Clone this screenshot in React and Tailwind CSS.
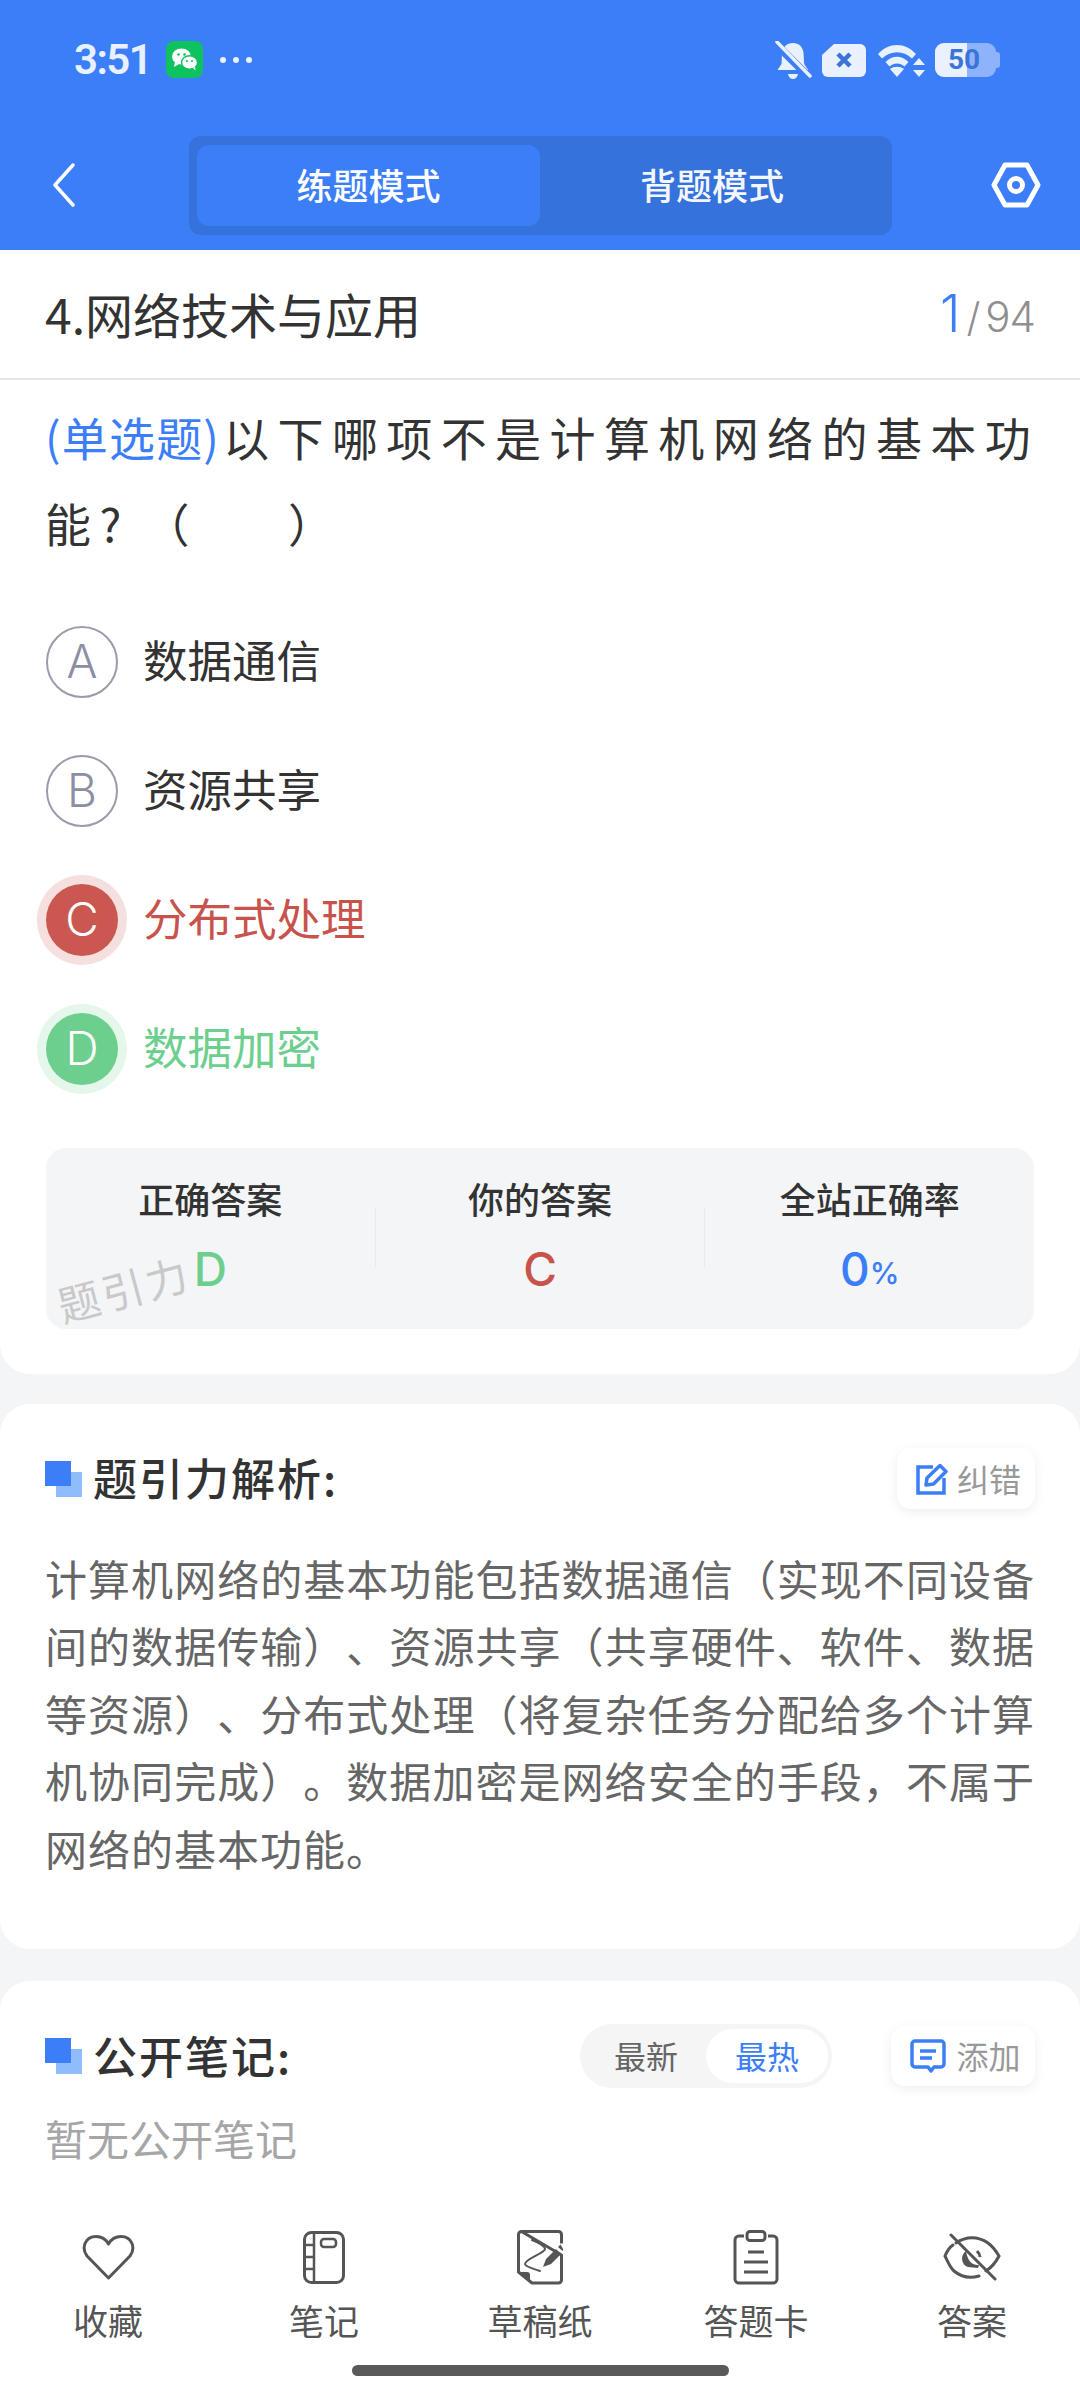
import React from "react";

const CJK = "font-['Noto_Sans_CJK_SC','Noto_Sans',sans-serif]";

function Squares() {
  return (
    <div className="relative w-[36px] h-[36px] shrink-0">
      <div className="absolute left-[11px] top-[11px] w-[26px] h-[25px] bg-[#8fbcfb]" />
      <div className="absolute left-0 top-0 w-[26px] h-[25px] bg-[#3b7ef8]" />
    </div>
  );
}

function Option({ letter, text, state }) {
  const circle =
    state === "wrong"
      ? "bg-[#cb5850] text-white shadow-[0_0_0_9px_#f6e0df]"
      : state === "right"
      ? "bg-[#6dcf8e] text-white shadow-[0_0_0_9px_#e4f7ea]"
      : "border-2 border-[#9a9cac] text-[#8c8fa3]";
  const color =
    state === "wrong" ? "text-[#c8534c]" : state === "right" ? "text-[#6dcf8e]" : "text-[#333333]";
  return (
    <div className="h-[129px] flex items-center">
      <div className={`w-[72px] h-[72px] rounded-full flex items-center justify-center text-[46px] font-light font-['Inter',sans-serif] ${circle}`}>
        {letter}
      </div>
      <div className={`ml-[25px] pb-[4px] text-[44.500px] leading-none ${color}`}>{text}</div>
    </div>
  );
}

function Stat({ label, children }) {
  return (
    <div className="flex-1 flex flex-col items-center">
      <div className="text-[36px] leading-[46px] font-medium text-[#333333]">{label}</div>
      <div className="mt-[22px] h-[52px] flex items-center font-['Inter',sans-serif] font-medium text-[46px] leading-none">
        {children}
      </div>
    </div>
  );
}

function NavItem({ label, icon }) {
  return (
    <div className="w-[216px] flex flex-col items-center">
      <div className="h-[56px] flex items-center justify-center">{icon}</div>
      <div className="mt-[17px] text-[35px] leading-[35px] text-[#555555]">{label}</div>
    </div>
  );
}

export default function App() {
  return (
    <div className={`w-[1080px] h-[2400px] flex flex-col bg-[#f4f5f7] overflow-hidden [text-spacing-trim:space-all] ${CJK}`}>
      {/* Header */}
      <div className="h-[250px] bg-[#3b7ef8] shrink-0">
        <div className="h-[136px] flex items-start justify-between pt-[41px] pl-[74px] pr-[80px]">
          <div className="flex items-center h-[37px]">
            <span className="text-[42px] leading-none font-semibold tracking-[-1.600px] text-[#e9f0fe] font-['Roboto',sans-serif]">3:51</span>
            <div className="ml-[15px] w-[37px] h-[37px] rounded-[8px] bg-[#0ec25f] flex items-center justify-center">
              <svg width="27" height="23" viewBox="0 0 27 23">
                <ellipse cx="10.500" cy="8.500" rx="9.500" ry="8" fill="#fff" />
                <path d="M4 14l-1 5 5-3z" fill="#fff" />
                <ellipse cx="18.500" cy="14.500" rx="8" ry="6.800" fill="#fff" stroke="#0ec25f" strokeWidth="1.400" />
                <path d="M22 20l2.500 2.500-.5-4z" fill="#fff" />
                <circle cx="7.500" cy="6.500" r="1.300" fill="#0ec25f" />
                <circle cx="13.500" cy="6.500" r="1.300" fill="#0ec25f" />
                <circle cx="16" cy="13" r="1.100" fill="#0ec25f" />
                <circle cx="21" cy="13" r="1.100" fill="#0ec25f" />
              </svg>
            </div>
            <div className="ml-[17px] flex gap-[7px]">
              <div className="w-[6px] h-[6px] rounded-full bg-[#e9f0fe]" />
              <div className="w-[6px] h-[6px] rounded-full bg-[#e9f0fe]" />
              <div className="w-[6px] h-[6px] rounded-full bg-[#e9f0fe]" />
            </div>
          </div>
          <div className="flex items-center h-[37px] text-[#e9f0fe]">
            <svg width="38" height="40" viewBox="0 0 38 40" className="mt-[2px]">
              <path d="M19 2c6 0 10 4 10.500 10l.7 11 4 6H3.500l4-6 .5-11C8.500 6 13 2 19 2z" fill="#e9f0fe" />
              <path d="M14 33h10c-.5 3-2.500 5-5 5s-4.500-2-5-5z" fill="#e9f0fe" />
              <path d="M2 3l33 33" stroke="#3b7ef8" strokeWidth="8" />
              <path d="M3 1l33 34" stroke="#e9f0fe" strokeWidth="3.500" strokeLinecap="round" />
            </svg>
            <svg width="44" height="34" viewBox="0 0 44 34" className="ml-[10px]">
              <path d="M12 1h26a6 6 0 0 1 6 6v21a6 6 0 0 1-6 6H6a6 6 0 0 1-6-6V12z" fill="#e9f0fe" />
              <path d="M16 11l12 12M28 11L16 23" stroke="#3b74d8" strokeWidth="4.500" />
            </svg>
            <svg width="48" height="34" viewBox="0 0 48 34" className="ml-[12px]">
              <path d="M0 11C11 -1 27 -1 38 11l-4 4.500C25 7 13 7 4 15.500z" fill="#e9f0fe" />
              <path d="M7.500 19c7-7 16-7 23 0l-4 4.500c-4.500-4-10.500-4-15 0z" fill="#e9f0fe" />
              <path d="M19 34l-7-8c4-3 10-3 14 0z" fill="#e9f0fe" />
              <path d="M41 15l6 7H35zM41 34l-6-7h12z" fill="#e9f0fe" />
            </svg>
            <div className="ml-[9px] relative w-[65px] h-[34px]">
              <div className="absolute right-0 top-[9px] w-[5px] h-[16px] rounded-r-[3px] bg-[#8fb3fa]" />
              <div className="absolute left-0 top-0 w-[61px] h-[34px] rounded-[9px] bg-[#8fb3fa] overflow-hidden">
                <div className="w-[32px] h-full bg-[#e9f0fe]" />
              </div>
              <div className="absolute left-[13px] top-0 h-[34px] flex items-center text-[28px] leading-none font-bold text-[#3b74d8] font-['Roboto',sans-serif]">50</div>
            </div>
          </div>
        </div>
        <div className="h-[99px] flex items-center pl-[52px]">
          <svg width="24" height="44" viewBox="0 0 24 44" className="-mt-[2px]">
            <path d="M21 2L3 22l18 20" fill="none" stroke="#fff" strokeWidth="3.500" strokeLinecap="round" strokeLinejoin="round" />
          </svg>
          <div className="ml-[113px] w-[703px] h-[99px] rounded-[12px] bg-[#3672dc] flex items-center px-[8px]">
            <div className="w-[343px] h-[81px] pb-[4px] rounded-[12px] bg-[#3b7ef8] flex items-center justify-center text-[36px] font-medium text-white">练题模式</div>
            <div className="w-[344px] h-[81px] pb-[4px] flex items-center justify-center text-[36px] font-medium text-[#f4f7fe]">背题模式</div>
          </div>
          <svg width="50" height="46" viewBox="0 0 50 46" className="ml-[99px] -mt-[1px]">
            <path d="M14 3h22l11 20-11 20H14L3 23z" fill="none" stroke="#fff" strokeWidth="5" strokeLinejoin="round" />
            <circle cx="25" cy="23" r="6.500" fill="none" stroke="#fff" strokeWidth="5" />
          </svg>
        </div>
      </div>

      {/* Question card */}
      <div className="bg-white rounded-b-[30px] pb-[45px] shrink-0">
        <div className="h-[130px] border-b-2 border-[#e5e6e8] flex items-center justify-between px-[45px]">
          <div className="pb-[3px] text-[48px] leading-none text-[#333333]">4.网络技术与应用</div>
          <div className="flex items-baseline font-['Inter',sans-serif]">
            <span className="text-[52px] leading-none font-light text-[#3b7ef8]">1</span>
            <span className="ml-[6px] text-[40px] leading-none font-light text-[#8f8f8f]">/</span>
            <span className="ml-[5px] text-[42px] leading-none tracking-[-1px] font-light text-[#8f8f8f]">94</span>
          </div>
        </div>
        <div className="px-[46px]">
          <div className="pt-[13px] -ml-[1px] -mr-[16px] text-[46px] leading-[86px] text-[#333333] tracking-[8.400px]">
            <span className="text-[#3b7ef8] tracking-[1.200px] mr-[3px]">(单选题)</span>
            以下哪项不是计算机网络的基本功能?<span className="inline-block w-[14px]" />（<span className="inline-block w-[90px]" />）
          </div>
          <div className="mt-[32px]">
            <Option letter="A" text="数据通信" />
            <Option letter="B" text="资源共享" />
            <Option letter="C" text="分布式处理" state="wrong" />
            <Option letter="D" text="数据加密" state="right" />
          </div>
          <div className="relative mt-[35px] h-[181px] rounded-[20px] bg-[#f4f5f7] flex items-start pt-[27px]">
            <Stat label="正确答案"><span className="text-[#6dcf8e]">D</span></Stat>
            <div className="w-px h-[60px] mt-[32px] bg-[#e8eaed]" />
            <Stat label="你的答案"><span className="text-[#c8534c]">C</span></Stat>
            <div className="w-px h-[60px] mt-[32px] bg-[#e8eaed]" />
            <Stat label="全站正确率">
              <span className="text-[#3b7ef8]">0</span>
              <span className="text-[#3b7ef8] text-[30px] mt-[8px]">%</span>
            </Stat>
            <div className="absolute left-[10px] top-[119px] -rotate-[15deg] text-[42px] leading-none tracking-[3px] text-[#c9c9c9]">题引力</div>
          </div>
        </div>
      </div>

      {/* Analysis card */}
      <div className="mt-[30px] bg-white rounded-[30px] px-[45px] pt-[44px] pb-[68px] shrink-0">
        <div className="flex items-center justify-between h-[61px]">
          <div className="flex items-center">
            <Squares />
            <div className="ml-[12px] pb-[3px] text-[44px] leading-none font-medium tracking-[2px] text-[#333333]">题引力解析:</div>
          </div>
          <div className="w-[138px] h-[61px] pl-[5px] rounded-[14px] bg-white shadow-[0_3px_12px_rgba(0,0,0,0.07)] flex items-center justify-center">
            <svg width="32" height="32" viewBox="0 0 32 32">
              <path d="M17 4H2v26h26V15" fill="none" stroke="#3b7ef8" strokeWidth="3.500" />
              <path d="M10 22l1-7L24 2.500l6 6L17.500 21z" fill="none" stroke="#3b7ef8" strokeWidth="3.500" strokeLinejoin="round" />
            </svg>
            <span className="ml-[9px] pb-[2px] text-[32px] leading-none text-[#999999]">纠错</span>
          </div>
        </div>
        <div className="mt-[35px] text-[42px] leading-[67.400px] tracking-[1px] text-[#666666] text-justify">
          计算机网络的基本功能包括数据通信（实现不同设备间的数据传输）、资源共享（共享硬件、软件、数据等资源）、分布式处理（将复杂任务分配给多个计算机协同完成）。数据加密是网络安全的手段，不属于网络的基本功能。
        </div>
      </div>

      {/* Notes card */}
      <div className="mt-[32px] flex-1 bg-white rounded-t-[30px] px-[45px] pt-[43px]">
        <div className="flex items-center h-[64px]">
          <Squares />
          <div className="ml-[12px] pb-[3px] text-[44px] leading-none font-medium tracking-[2px] text-[#333333]">公开笔记:</div>
          <div className="ml-auto w-[252px] h-[64px] rounded-full bg-[#f5f5f5] flex items-center pl-[34px] pr-[4px]">
            <span className="pb-[2px] text-[32px] leading-none text-[#666666]">最新</span>
            <div className="ml-auto w-[122px] h-[54px] pb-[2px] rounded-full bg-white flex items-center justify-center text-[32px] leading-none text-[#3b7ef8]">最热</div>
          </div>
          <div className="ml-[59px] w-[144px] h-[60px] pl-[5px] rounded-[14px] bg-white shadow-[0_3px_12px_rgba(0,0,0,0.07)] flex items-center justify-center">
            <svg width="36" height="34" viewBox="0 0 36 34">
              <path d="M5 2h26a3 3 0 0 1 3 3v20a3 3 0 0 1-3 3h-7l-3 4-3-4H5a3 3 0 0 1-3-3V5a3 3 0 0 1 3-3z" fill="none" stroke="#3b7ef8" strokeWidth="3.500" strokeLinejoin="round" />
              <path d="M10 12h16M10 19h12" stroke="#3b7ef8" strokeWidth="3.500" />
            </svg>
            <span className="ml-[10px] pb-[2px] text-[32px] leading-none text-[#999999]">添加</span>
          </div>
        </div>
        <div className="mt-[20px] text-[42px] leading-[60px] text-[#a6a6a6]">暂无公开笔记</div>
      </div>

      {/* Bottom bar */}
      <div className="h-[171px] bg-white shrink-0 flex flex-col">
        <div className="flex">
          <NavItem
            label="收藏"
            icon={
              <svg width="53" height="47" viewBox="0 0 53 47">
                <path d="M26.500 44L5 22C-1 14 3 2.500 14 2.500c5.500 0 10 3 12.500 7.500 2.500-4.500 7-7.500 12.500-7.500 11 0 15 11.500 9 19.500z" fill="none" stroke="#555" strokeWidth="3" strokeLinejoin="round" />
              </svg>
            }
          />
          <NavItem
            label="笔记"
            icon={
              <svg width="42" height="53" viewBox="0 0 42 53">
                <rect x="1.500" y="1.500" width="39" height="50" rx="7" fill="none" stroke="#555" strokeWidth="3" />
                <path d="M11 2v49M2 14h9M2 26h9M2 38h9" fill="none" stroke="#555" strokeWidth="2.500" />
                <rect x="18" y="8" width="15" height="8" rx="3" fill="none" stroke="#555" strokeWidth="2.500" />
              </svg>
            }
          />
          <NavItem
            label="草稿纸"
            icon={
              <svg width="46" height="55" viewBox="0 0 46 55">
                <path d="M4.500 1.500h37a3 3 0 0 1 3 3v9M44.500 25v25a3 3 0 0 1-3 3H15L1.500 42V4.500a3 3 0 0 1 3-3z" fill="none" stroke="#555" strokeWidth="3" strokeLinejoin="round" />
                <path d="M2 42h8a3 3 0 0 1 3 3v7z" fill="#555" />
                <path d="M15 10c5 2 13 6 13 9 0 4-20 10-20 15 0 3 10 5 15 7" fill="none" stroke="#555" strokeWidth="2" strokeLinecap="round" />
                <path d="M26 37l3-8 10-10 5 5-10 10zM41 17l2.500-2.500 3 5-1 1.500z" fill="#555" />
              </svg>
            }
          />
          <NavItem
            label="答题卡"
            icon={
              <svg width="46" height="55" viewBox="0 0 46 55">
                <path d="M11 6H6a4 4 0 0 0-4 4v39a4 4 0 0 0 4 4h34a4 4 0 0 0 4-4V10a4 4 0 0 0-4-4h-5" fill="none" stroke="#555" strokeWidth="3" />
                <rect x="14" y="1.500" width="18" height="9" rx="3" fill="none" stroke="#555" strokeWidth="3" />
                <path d="M15 22h16M11 32h24M11 42h24" stroke="#555" strokeWidth="3" />
              </svg>
            }
          />
          <NavItem
            label="答案"
            icon={
              <svg width="58" height="48" viewBox="0 0 58 48">
                <path d="M13 10c10-7 22-7 32 0 5 3.500 8 8 11 13-3 6-7 11-13 15M36 43c-10 3-19 0-25-5-4-3.500-6-9-9-15 2-5 5-9 8-11" fill="none" stroke="#555" strokeWidth="3" strokeLinecap="round" />
                <path d="M23 18c-6 4-5 14 2 16l10 1 1-3c-6 0-11-2-13-14z" fill="#555" />
                <path d="M34 18c2 2 3 4 3 6" fill="none" stroke="#555" strokeWidth="3" />
                <path d="M8 2l44 44" stroke="#555" strokeWidth="3" strokeLinecap="round" />
              </svg>
            }
          />
        </div>
        <div className="mt-[28px] mx-auto w-[377px] h-[11px] rounded-full bg-[#5a5a5a]" />
      </div>
    </div>
  );
}
